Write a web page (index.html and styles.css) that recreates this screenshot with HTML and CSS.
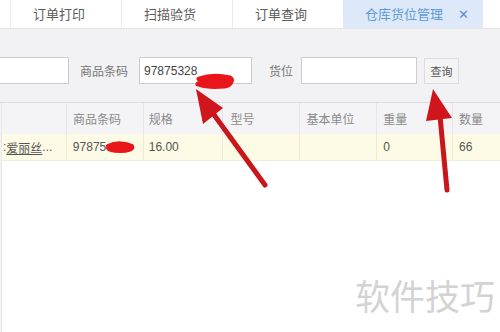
FILE: index.html
```html
<!DOCTYPE html>
<html lang="zh-CN">
<head>
  <meta charset="UTF-8">
  <title>仓库货位管理</title>
  <meta name="viewport" content="width=device-width, initial-scale=1.0">
  <link rel="stylesheet" href="styles.css">
</head>
<body>
  <div class="page">
    <div class="tabs">
      <div class="tab">订单打印</div>
      <div class="tab">扫描验货</div>
      <div class="tab">订单查询</div>
      <div class="tab active">仓库货位管理 <span class="close">✕</span></div>
    </div>

    <div class="filter">
      <input class="field first" type="text">
      <label class="label">商品条码</label>
      <input class="field code" type="text" value="97875328">
      <label class="label place">货位</label>
      <input class="field spot" type="text">
      <button class="btn">查询</button>
    </div>

    <div class="grid">
      <div class="row head">
        <div class="cell c1"></div>
        <div class="cell c2">商品条码</div>
        <div class="cell c3">规格</div>
        <div class="cell c4">型号</div>
        <div class="cell c5">基本单位</div>
        <div class="cell c6">重量</div>
        <div class="cell c7">数量</div>
      </div>
      <div class="row data">
        <div class="cell c1 name">:<u>爱丽丝</u>...</div>
        <div class="cell c2">97875</div>
        <div class="cell c3">16.00</div>
        <div class="cell c4"></div>
        <div class="cell c5"></div>
        <div class="cell c6">0</div>
        <div class="cell c7">66</div>
      </div>
      <div class="empty"></div>
    </div>

    <div class="mark">软件技巧</div>

    <svg class="overlay" width="500" height="332" viewBox="0 0 500 332">
      <!-- 涂抹 -->
      <path d="M199 79 C210 75 222 76 230 78 C233 80 231 85 224 86 C214 87 204 86 198 84" fill="#e8151b" stroke="#e8151b" stroke-width="5" stroke-linecap="round"/>
      <path d="M108 146 C116 142 126 143 132 146 C134 149 128 151 120 151 C114 151 109 150 108 148" fill="#e8151b" stroke="#e8151b" stroke-width="4" stroke-linecap="round"/>
      <!-- 箭头 -->
      <line x1="265" y1="185" x2="212" y2="112" stroke="#c9161c" stroke-width="5" stroke-linecap="round"/>
      <polygon points="196,89 203,124 223,108" fill="#d0161c"/>
      <line x1="447" y1="190" x2="440" y2="116" stroke="#c9161c" stroke-width="5" stroke-linecap="round"/>
      <polygon points="433,89 426,121 452,118" fill="#d0161c"/>
    </svg>
  </div>
</body>
</html>
```

FILE: styles.css
```css
body {
  margin: 0;
  font-family: "Noto Sans CJK SC", "Liberation Sans", sans-serif;
  font-size: 12px;
  color: #666;
}
.page {
  position: relative;
  width: 500px;
  height: 332px;
  overflow: hidden;
  background: #f2f2f4;
}
.tabs {
  display: flex;
  height: 29px;
  padding-left: 10px;
  background: #fff;
  border-bottom: 1px solid #e6e6e8;
  box-sizing: border-box;
}
.tab {
  width: 111px;
  padding-left: 22px;
  box-sizing: border-box;
  border-left: 1px solid #ececec;
  font-size: 13px;
  line-height: 28px;
  color: #5c5c5c;
  white-space: nowrap;
}
.tab.active {
  width: 140px;
  background: #dde8f8;
  color: #5d9ad8;
  border-left: none;
}
.close {
  margin-left: 12px;
  color: #5a8fd0;
  font-size: 13px;
}
.filter {
  display: flex;
  align-items: center;
  height: 74px;
  padding-top: 10px;
  box-sizing: border-box;
  border-bottom: 1px solid #dcdcde;
}
.field {
  height: 27px;
  margin: 0;
  padding: 0 4px;
  box-sizing: border-box;
  border: 1px solid #ccc;
  background: #fff;
  font-family: "Liberation Sans", sans-serif;
  font-size: 12px;
  color: #444;
  outline: none;
}
.first {
  width: 69px;
  border-left: none;
}
.label {
  margin-left: 11px;
  margin-right: 11px;
  color: #777;
}
.label.place {
  margin-left: 17px;
  margin-right: 8px;
}
.code {
  width: 113px;
}
.spot {
  width: 116px;
}
.btn {
  width: 35px;
  height: 26px;
  margin-left: 7px;
  padding: 0;
  border: 1px solid #ddd;
  background: #f4f4f4;
  font-family: inherit;
  font-size: 11px;
  color: #555;
}
.grid {
  background: #fff;
  height: 229px;
  border-left: 1px solid #e8e8ea;
  margin-left: 1px;
}
.row {
  display: flex;
}
.head {
  height: 31px;
  background: #f4f4f6;
  color: #8a8a8a;
}
.data {
  height: 26px;
  background: #fdfae6;
  color: #555;
  border-bottom: 1px solid #f1eedc;
}
.cell {
  display: flex;
  align-items: center;
  padding-left: 6px;
  box-sizing: border-box;
  border-right: 1px solid #e6e6e6;
  white-space: nowrap;
  overflow: hidden;
}
.data .cell {
  border-right-color: #eee9d2;
  font-family: "Liberation Sans", "Noto Sans CJK SC", sans-serif;
}
.c1 { width: 65px; }
.c2 { width: 77px; }
.c3 { width: 79px; padding-left: 5px; }
.c4 { width: 78px; padding-left: 8px; }
.c5 { width: 77px; }
.c6 { width: 76px; }
.c7 { width: 47px; border-right: none; }
.data .name {
  padding-left: 1px;
}
.mark {
  position: absolute;
  right: 5px;
  bottom: 17px;
  font-size: 35px;
  line-height: 40px;
  color: #d3d3d3;
}
.overlay {
  position: absolute;
  left: 0;
  top: 0;
}
```
